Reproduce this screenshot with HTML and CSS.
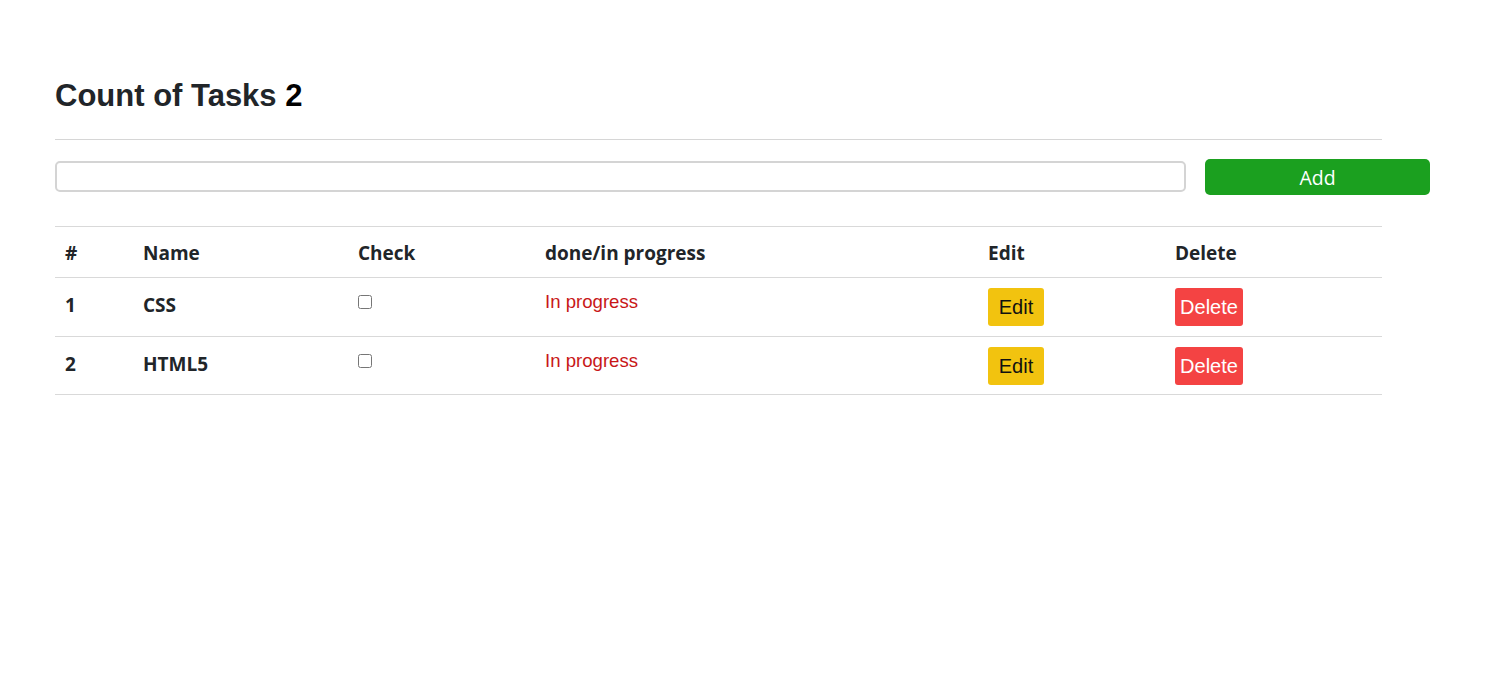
FILE: index.html
```html
<!DOCTYPE html>
<html>
<head>
<meta charset="utf-8">
<title>Tasks</title>
<link rel="stylesheet" href="styles.css">
</head>
<body>
<div class="container">
  <h1 class="title">Count of Tasks <span class="count">2</span></h1>
  <hr class="divider">
  <div class="add-row">
    <input class="task-input" type="text">
    <button class="btn-add">Add</button>
  </div>
  <table class="tasks">
    <colgroup>
      <col class="c1"><col class="c2"><col class="c3"><col class="c4"><col class="c5"><col class="c6">
    </colgroup>
    <thead>
      <tr><th>#</th><th>Name</th><th>Check</th><th>done/in progress</th><th>Edit</th><th>Delete</th></tr>
    </thead>
    <tbody>
      <tr>
        <th>1</th><th>CSS</th>
        <td><input class="check" type="checkbox"></td>
        <td class="status">In progress</td>
        <td><button class="btn-edit">Edit</button></td>
        <td><button class="btn-delete">Delete</button></td>
      </tr>
      <tr>
        <th>2</th><th>HTML5</th>
        <td><input class="check" type="checkbox"></td>
        <td class="status">In progress</td>
        <td><button class="btn-edit">Edit</button></td>
        <td><button class="btn-delete">Delete</button></td>
      </tr>
    </tbody>
  </table>
</div>
</body>
</html>
```

FILE: styles.css
```css
html, body {
  margin: 0;
  padding: 0;
  background: #fff;
}
body {
  font-family: "Open Sans", "Noto Sans", sans-serif;
  color: #212529;
}
.container {
  width: 1327px;
  margin-left: 55px;
  padding-top: 77px;
}
.title {
  margin: 0;
  font-family: "Liberation Sans", Arial, sans-serif;
  font-size: 31px;
  font-weight: 700;
  line-height: 1.2;
  color: #212529;
}
.count {
  color: #000;
}
.divider {
  margin: 25px 0 19px 0;
  border: 0;
  border-top: 1px solid #d6d6d6;
  height: 0;
}
.add-row {
  display: flex;
  align-items: flex-start;
  height: 36px;
}
.task-input {
  flex: none;
  box-sizing: border-box;
  width: 1131px;
  height: 31px;
  margin: 2px 0 0 0;
  border: 2px solid #d4d4d4;
  border-radius: 5px;
  background: #fff;
  padding: 0 8px;
  outline: none;
}
.btn-add {
  flex: none;
  box-sizing: border-box;
  width: 225px;
  height: 36px;
  margin-left: 19px;
  border: 0;
  border-radius: 5px;
  background: #1ba01f;
  color: #fff;
  font-family: "Open Sans", "Noto Sans", sans-serif;
  font-size: 19.5px;
  padding: 0;
}
.tasks {
  margin-top: 31px;
  width: 1327px;
  border-collapse: collapse;
  table-layout: fixed;
}
.c1 { width: 78px; }
.c2 { width: 215px; }
.c3 { width: 187px; }
.c4 { width: 443px; }
.c5 { width: 187px; }
.c6 { width: 217px; }
.tasks th,
.tasks td {
  text-align: left;
  vertical-align: top;
  padding: 10px;
  border-top: 1px solid #d9d9d9;
  font-size: 19px;
  line-height: 28px;
}
.tasks th {
  font-weight: 700;
}
.tasks thead th {
  padding-top: 12px;
  padding-bottom: 10px;
}
.tasks tbody th {
  padding-top: 13px;
  padding-bottom: 7px;
}
.tasks tbody tr:last-child th,
.tasks tbody tr:last-child td {
  border-bottom: 1px solid #d9d9d9;
}
.tasks tbody tr:last-child td {
  padding-bottom: 9px;
}
.tasks tbody tr:last-child th {
  padding-bottom: 6px;
}
.check {
  display: block;
  margin: 7px 0 0 0;
  width: 14px;
  height: 14px;
}
.tasks td.status {
  font-family: "Liberation Sans", Arial, sans-serif;
  font-size: 18.6px;
  color: #c81717;
  line-height: 28px;
}
.btn-edit,
.btn-delete {
  display: block;
  box-sizing: border-box;
  height: 38px;
  border: 0;
  border-radius: 3px;
  font-family: "Liberation Sans", Arial, sans-serif;
  font-size: 20px;
  padding: 0;
}
.btn-edit {
  width: 56px;
  background: #f2c30f;
  color: #111;
}
.btn-delete {
  width: 68px;
  background: #f44343;
  color: #fff;
}
```
